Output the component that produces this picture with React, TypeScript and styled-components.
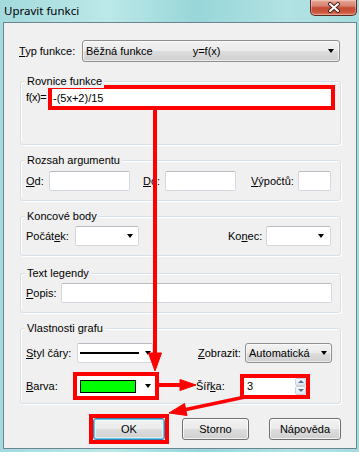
import React from 'react';
import styled, { createGlobalStyle } from 'styled-components';

const GlobalStyle = createGlobalStyle`
  html, body {
    margin: 0;
    padding: 0;
    background: #ffffff;
  }
  body {
    font-family: "Liberation Sans", Arial, sans-serif;
    font-size: 11px;
    color: #000;
  }
`;

const Window = styled.div`
  position: relative;
  width: 359px;
  height: 452px;
  overflow: hidden;
  display: flex;
  flex-direction: column;
  background: linear-gradient(90deg, #a3dadd 0%, #bce8e8 30%, #98d6d9 55%, #b2e2e3 80%, #a6dcde 100%);
`;

const TitleBar = styled.div`
  flex: none;
  height: 22px;
  display: flex;
  align-items: flex-start;
  justify-content: space-between;
`;

const Title = styled.div`
  font-family: "Noto Sans", "Liberation Sans", sans-serif;
  font-size: 11.5px;
  line-height: 22px;
  padding-left: 4px;
  color: #000;
`;

const CloseButton = styled.div`
  width: 45px;
  height: 15px;
  margin-right: 2px;
  border: 1px solid #5b2a22;
  border-top: none;
  border-radius: 0 0 5px 5px;
  background: linear-gradient(#e8a898 0%, #d98170 40%, #c54b35 52%, #cc553c 80%, #dc7f64 100%);
  box-shadow: inset 0 0 0 1px rgba(255, 255, 255, 0.3);
  display: flex;
  align-items: center;
  justify-content: center;
`;

const Client = styled.div`
  flex: 1;
  margin: 0 2px 3px 3px;
  padding: 17px 15px 0 16px;
  background: #f0f0f0;
  border: 1px solid #6d858f;
  display: flex;
  flex-direction: column;
`;

const Row = styled.div<{ $h?: number; $mt?: number; $ml?: number }>`
  display: flex;
  align-items: center;
  height: ${(p) => p.$h ?? 20}px;
  margin-top: ${(p) => p.$mt ?? 0}px;
  margin-left: ${(p) => p.$ml ?? 0}px;
`;

const Label = styled.span<{ $w: number; $ml?: number }>`
  flex: none;
  width: ${(p) => p.$w}px;
  margin-left: ${(p) => p.$ml ?? 0}px;
  white-space: nowrap;
  line-height: 13px;
`;

const TightLabel = styled(Label)`
  letter-spacing: -0.4px;
`;

const Group = styled.section<{ $h: number; $mt: number; $pt: number }>`
  position: relative;
  box-sizing: border-box;
  height: ${(p) => p.$h}px;
  margin-top: ${(p) => p.$mt}px;
  padding: ${(p) => p.$pt}px 0 0 5px;
  border: 1px solid #d5dfe5;
  border-radius: 3px;
  box-shadow: inset 1px 1px 0 #ffffff, 1px 1px 0 #ffffff;
`;

const Legend = styled.div`
  position: absolute;
  top: -7px;
  left: 4px;
  padding: 0 2px;
  line-height: 13px;
  background: #f0f0f0;
  white-space: nowrap;
`;

const TextBox = styled.input<{ $w: number }>`
  flex: none;
  box-sizing: border-box;
  width: ${(p) => p.$w}px;
  height: 20px;
  margin: 0;
  padding: 0 3px;
  font: inherit;
  color: #000;
  background: #fff;
  border: 1px solid #d3d8de;
  border-top-color: #b7bcc3;
  border-radius: 2px;
  outline: none;
`;

const Combo = styled.div<{ $w: number; $pr: number }>`
  flex: none;
  box-sizing: border-box;
  width: ${(p) => p.$w}px;
  height: 20px;
  padding: 0 ${(p) => p.$pr}px 0 2px;
  display: flex;
  align-items: center;
  background: #fff;
  border: 1px solid #d3d8de;
  border-top-color: #b7bcc3;
  border-radius: 2px;
`;

const ButtonCombo = styled.div<{ $w: number; $h: number; $pr: number }>`
  flex: none;
  box-sizing: border-box;
  width: ${(p) => p.$w}px;
  height: ${(p) => p.$h}px;
  padding: 0 ${(p) => p.$pr}px 0 3px;
  display: flex;
  align-items: center;
  border: 1px solid #8e8f8f;
  border-radius: 3px;
  background: linear-gradient(#f2f2f2 0%, #ebebeb 48%, #dddddd 52%, #cfcfcf 100%);
  box-shadow: inset 0 0 0 1px rgba(255, 255, 255, 0.6);
  white-space: nowrap;
`;

const ComboText = styled.span<{ $ml?: number }>`
  margin-left: ${(p) => p.$ml ?? 0}px;
  line-height: 13px;
`;

const DropArrow = styled.span`
  flex: none;
  margin-left: auto;
  width: 0;
  height: 0;
  border-left: 3.5px solid transparent;
  border-right: 3.5px solid transparent;
  border-top: 4px solid #000;
`;

const LineSample = styled.span`
  width: 59px;
  height: 2px;
  background: #000;
`;

const Highlight = styled.div<{ $w: number; $h: number }>`
  flex: none;
  box-sizing: border-box;
  width: ${(p) => p.$w}px;
  height: ${(p) => p.$h}px;
  border: 4px solid #ff0000;
  background: #fff;
  display: flex;
  align-items: center;
`;

const PlainInput = styled.input`
  flex: 1;
  min-width: 0;
  height: 100%;
  box-sizing: border-box;
  margin: 0;
  padding: 0 0 0 ${(p) => (p.type === 'number' ? 3 : 1)}px;
  font: inherit;
  color: #000;
  background: transparent;
  border: none;
  outline: none;
`;

const ColorSwatch = styled.span<{ $color: string }>`
  flex: none;
  box-sizing: border-box;
  width: 56px;
  height: 13px;
  margin-left: 3px;
  background: ${(p) => p.$color};
  border: 1px solid #000;
`;

const InnerArrow = styled(DropArrow)`
  margin-right: 4px;
`;

const Spinner = styled.div`
  flex: none;
  width: 11px;
  height: 100%;
  display: flex;
  flex-direction: column;
`;

const SpinButton = styled.div<{ $down?: boolean }>`
  flex: 1;
  box-sizing: border-box;
  border: 1px solid #c9d2dc;
  border-radius: 2px;
  background: linear-gradient(#f6f9fc, #dfe6ee);
  display: flex;
  align-items: center;
  justify-content: center;
  &::after {
    content: '';
    width: 0;
    height: 0;
    border-left: 3px solid transparent;
    border-right: 3px solid transparent;
    ${(p) => (p.$down ? 'border-top: 3px solid #56739a;' : 'border-bottom: 3px solid #56739a;')}
  }
`;

const ButtonRow = styled.div`
  display: flex;
  align-items: center;
  justify-content: flex-end;
  margin-top: 10px;
  height: 30px;
`;

const Button = styled.button<{ $w: number; $ml?: number; $focused?: boolean }>`
  flex: none;
  box-sizing: border-box;
  width: ${(p) => p.$w}px;
  height: 22px;
  margin: 0 0 0 ${(p) => p.$ml ?? 0}px;
  padding: 0;
  font: inherit;
  color: #000;
  border: 1px solid ${(p) => (p.$focused ? '#3c7fb1' : '#707070')};
  border-radius: 3px;
  background: linear-gradient(#f2f2f2 0%, #ebebeb 48%, #dddddd 52%, #cfcfcf 100%);
  box-shadow: ${(p) =>
    p.$focused
      ? 'inset 0 0 0 1px #62cdf3, inset 0 0 0 2px rgba(255,255,255,0.5)'
      : 'inset 0 0 0 1px rgba(255,255,255,0.7)'};
`;

const ButtonHighlight = styled.div`
  flex: none;
  box-sizing: border-box;
  width: 80px;
  height: 30px;
  border: 4px solid #ff0000;
  display: flex;
`;

const Overlay = styled.svg`
  position: absolute;
  left: 0;
  top: 0;
  pointer-events: none;
`;

const A = ({ children }: { children: string }) => <u>{children}</u>;

const App = () => {
  return (
    <>
      <GlobalStyle />
      <Window>
        <TitleBar>
          <Title>Upravit funkci</Title>
          <CloseButton>
            <svg width="14" height="11" viewBox="0 0 14 11">
              <path d="M3 2 L11 9 M11 2 L3 9" stroke="#4a2620" strokeWidth="4" strokeLinecap="round" />
              <path d="M3 2 L11 9 M11 2 L3 9" stroke="#ffffff" strokeWidth="2" strokeLinecap="round" />
            </svg>
          </CloseButton>
        </TitleBar>

        <Client>
          <Row $h={22} $ml={-1}>
            <Label $w={63}>
              <A>T</A>yp funkce:
            </Label>
            <ButtonCombo $w={258} $h={22} $pr={5}>
              <ComboText>Běžná funkce</ComboText>
              <ComboText $ml={40}>y=f(x)</ComboText>
              <DropArrow />
            </ButtonCombo>
          </Row>

          <Group $h={64} $mt={19} $pt={3}>
            <Legend>Rovnice funkce</Legend>
            <Row $h={25}>
              <TightLabel $w={22}>f(x)=</TightLabel>
              <Highlight $w={287} $h={25}>
                <PlainInput readOnly defaultValue="-(5x+2)/15" />
              </Highlight>
            </Row>
          </Group>

          <Group $h={41} $mt={15} $pt={10}>
            <Legend>Rozsah argumentu</Legend>
            <Row>
              <Label $w={23}>
                <A>O</A>d:
              </Label>
              <TextBox $w={81} readOnly />
              <Label $w={22} $ml={13}>
                <A>D</A>o:
              </Label>
              <TextBox $w={71} readOnly />
              <Label $w={47} $ml={15}>
                <A>V</A>ýpočtů:
              </Label>
              <TextBox $w={33} readOnly />
            </Row>
          </Group>

          <Group $h={40} $mt={15} $pt={9}>
            <Legend>Koncové body</Legend>
            <Row>
              <Label $w={49}>
                Počát<A>e</A>k:
              </Label>
              <Combo $w={64} $pr={5}>
                <DropArrow />
              </Combo>
              <Label $w={38} $ml={89}>
                Ko<A>n</A>ec:
              </Label>
              <Combo $w={65} $pr={6}>
                <DropArrow />
              </Combo>
            </Row>
          </Group>

          <Group $h={40} $mt={17} $pt={9}>
            <Legend>Text legendy</Legend>
            <Row>
              <Label $w={35}>
                <A>P</A>opis:
              </Label>
              <TextBox $w={271} readOnly />
            </Row>
          </Group>

          <Group $h={76} $mt={15} $pt={14}>
            <Legend>Vlastnosti grafu</Legend>
            <Row>
              <Label $w={51}>
                <A>S</A>tyl čáry:
              </Label>
              <Combo $w={76} $pr={1}>
                <LineSample />
                <DropArrow />
              </Combo>
              <Label $w={47} $ml={45}>
                <A>Z</A>obrazit:
              </Label>
              <ButtonCombo $w={87} $h={20} $pr={4}>
                <ComboText>Automatická</ComboText>
                <DropArrow />
              </ButtonCombo>
            </Row>
            <Row $h={28} $mt={9}>
              <Label $w={47}>
                <A>B</A>arva:
              </Label>
              <Highlight $w={86} $h={28}>
                <ColorSwatch $color="#00ff00" />
                <InnerArrow />
              </Highlight>
              <Label $w={44} $ml={37}>
                Šíř<A>k</A>a:
              </Label>
              <Highlight $w={70} $h={25}>
                <PlainInput type="number" readOnly defaultValue="3" />
                <Spinner>
                  <SpinButton />
                  <SpinButton $down />
                </Spinner>
              </Highlight>
            </Row>
          </Group>

          <ButtonRow>
            <ButtonHighlight>
              <Button $w={72} $focused>
                OK
              </Button>
            </ButtonHighlight>
            <Button $w={67} $ml={13}>
              Storno
            </Button>
            <Button $w={72} $ml={20}>
              Nápověda
            </Button>
          </ButtonRow>
        </Client>

        <Overlay width={359} height={452} viewBox="0 0 359 452">
          <g fill="#ff0000" stroke="#ff0000">
            <line x1={155} y1={108} x2={155} y2={356} strokeWidth={4} />
            <path d="M148.5 353 L161.5 353 L155 371 Z" strokeWidth={1} />
            <line x1={158} y1={385} x2={183} y2={385} strokeWidth={4} />
            <path d="M180 379.5 L180 390.5 L196 385 Z" strokeWidth={1} />
            <line x1={245} y1={397} x2={186} y2={409.5} strokeWidth={3.5} />
            <path d="M169 413 L187 415.5 L184.5 403.5 Z" strokeWidth={1} />
          </g>
        </Overlay>
      </Window>
    </>
  );
};

export default App;
